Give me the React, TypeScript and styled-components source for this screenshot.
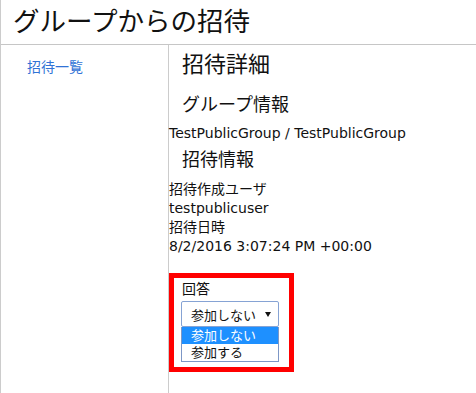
import React from 'react';
import styled, { createGlobalStyle } from 'styled-components';

const GlobalStyle = createGlobalStyle`
  html, body {
    margin: 0;
    padding: 0;
    background: #ffffff;
  }

  body {
    font-family: "DejaVu Sans", "Noto Sans CJK JP", sans-serif;
    color: #111111;
  }
`;

const Page = styled.div`
  min-height: 393px;
  border-left: 1px solid #cccccc;
  display: flex;
  flex-direction: column;
`;

const Header = styled.header`
  height: 44px;
  border-bottom: 1px solid #c6c6c6;
  display: flex;
  align-items: center;
  padding-left: 12px;
`;

const Title = styled.h1`
  margin: 0;
  font-size: 26.5px;
  font-weight: 400;
  line-height: 44px;
`;

const Body = styled.div`
  flex: 1;
  display: flex;
`;

const Sidebar = styled.nav`
  width: 168px;
  border-right: 1px solid #cccccc;
  padding: 12px 0 0 26px;
  box-sizing: border-box;
`;

const NavLink = styled.a`
  font-size: 14px;
  line-height: 20px;
  color: #3173d6;
  text-decoration: none;
`;

const Main = styled.main`
  flex: 1;
  display: flex;
  flex-direction: column;
  align-items: flex-start;
`;

const Heading = styled.h2<{ $size: number; $top: number }>`
  margin: ${(p) => p.$top}px 0 0 13px;
  font-size: ${(p) => p.$size}px;
  line-height: ${(p) => p.$size + 8}px;
  font-weight: 400;
`;

const Line = styled.div<{ $top?: number }>`
  margin-top: ${(p) => p.$top || 0}px;
  font-size: 14px;
  line-height: 19px;
`;

const AnswerBox = styled.div`
  margin-top: 17px;
  width: 125px;
  box-sizing: border-box;
  border: 5px solid #ff0000;
  padding: 2px 10px 5px 7px;
`;

const Label = styled.div`
  font-size: 14px;
  line-height: 19px;
  padding-left: 1px;
  margin-bottom: 2px;
`;

const SelectBox = styled.div`
  height: 26px;
  box-sizing: border-box;
  border: 1px solid #86a3d4;
  border-radius: 2px;
  background: #ffffff;
  display: flex;
  align-items: center;
  justify-content: space-between;
  padding: 0 7px 0 9px;
  font-size: 13px;
`;

const Arrow = styled.span`
  width: 0;
  height: 0;
  border-left: 3px solid transparent;
  border-right: 3px solid transparent;
  border-top: 5px solid #111111;
`;

const OptionList = styled.ul`
  list-style: none;
  margin: 0;
  padding: 0;
  border: 1px solid #7d97c6;
  border-top: none;
`;

const Option = styled.li<{ $active?: boolean }>`
  height: 17px;
  line-height: 17px;
  padding-left: 9px;
  font-size: 13px;
  background: ${(p) => (p.$active ? '#1e90ff' : '#ffffff')};
  color: ${(p) => (p.$active ? '#ffffff' : '#111111')};
`;

export default function App () {
  return (
    <>
      <GlobalStyle />
      <Page>
        <Header>
          <Title>グループからの招待</Title>
        </Header>
        <Body>
          <Sidebar>
            <NavLink href='#'>招待一覧</NavLink>
          </Sidebar>
          <Main>
            <Heading $size={22} $top={5}>招待詳細</Heading>
            <Heading $size={18} $top={12}>グループ情報</Heading>
            <Line $top={6}>TestPublicGroup / TestPublicGroup</Line>
            <Heading $size={18} $top={4}>招待情報</Heading>
            <Line $top={7}>招待作成ユーザ</Line>
            <Line>testpublicuser</Line>
            <Line>招待日時</Line>
            <Line>8/2/2016 3:07:24 PM +00:00</Line>
            <AnswerBox>
              <Label>回答</Label>
              <SelectBox>
                <span>参加しない</span>
                <Arrow />
              </SelectBox>
              <OptionList>
                <Option $active>参加しない</Option>
                <Option>参加する</Option>
              </OptionList>
            </AnswerBox>
          </Main>
        </Body>
      </Page>
    </>
  );
}
